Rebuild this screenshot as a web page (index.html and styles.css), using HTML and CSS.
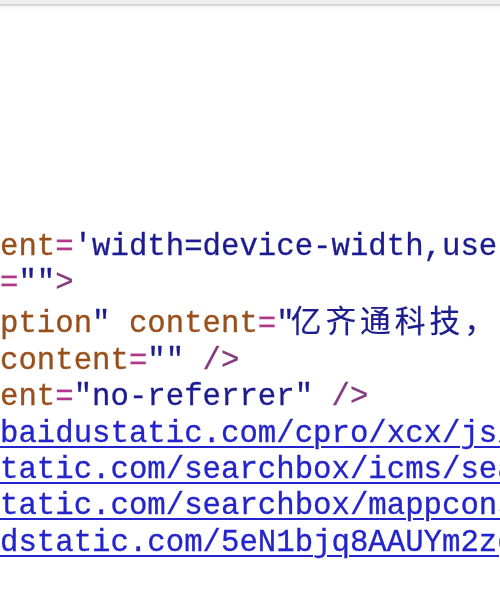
FILE: index.html
```html
<!DOCTYPE html>
<html lang="en">
<head>
    <meta charset="UTF-8">
    <meta name="viewport" content="width=device-width, initial-scale=1.0">
    <title>view-source</title>
    <link rel="stylesheet" href="styles.css">
</head>
<body>
    <div class="topbar"></div>
    <div class="topshade"></div>
    <div class="source">
        <div class="line"><span class="attr">ent</span><span class="eq">=</span><span class="val">'width=device-width,user-scalable=no,initial-scale=1.0'</span></div>
        <div class="line"><span class="eq">=</span><span class="val">""</span><span class="tag">&gt;</span></div>
        <div class="line tall"><span class="attr">ption</span><span class="val">"</span> <span class="attr">content</span><span class="eq">=</span><span class="val">"<span class="cjk">亿齐通科技，专注</span>"</span></div>
        <div class="line"><span class="attr">content</span><span class="eq">=</span><span class="val">""</span> <span class="tag">/&gt;</span></div>
        <div class="line"><span class="attr">ent</span><span class="eq">=</span><span class="val">"no-referrer"</span> <span class="tag">/&gt;</span></div>
        <div class="line"><a class="link" href="#">baidustatic.com/cpro/xcx/js/mip.js</a></div>
        <div class="line"><a class="link" href="#">tatic.com/searchbox/icms/searchbox/js/swan.js</a></div>
        <div class="line"><a class="link" href="#">tatic.com/searchbox/mappconsole/swan-core.js</a></div>
        <div class="line"><a class="link" href="#">dstatic.com/5eN1bjq8AAUYm2zgoY3K/swan.js</a></div>
    </div>
</body>
</html>
```

FILE: styles.css
```css
body {
    margin: 0;
    background: #fff;
    overflow: hidden;
}
.topbar {
    height: 4px;
    background: #eeeeee;
    border-bottom: 2px solid #d4d4d4;
}
.topshade {
    height: 6px;
    background: linear-gradient(#f6f6f6, #fff);
}
.source {
    margin-top: 216.5px;
    font-family: "Liberation Mono", monospace;
    font-size: 30.7px;
    line-height: 36.3px;
    overflow: hidden;
    filter: blur(0.5px);
    -webkit-text-stroke: 0.3px currentColor;
}
.line {
    height: 36.3px;
    white-space: pre;
}
.tall {
    height: 42px;
}
.attr {
    color: #994f1c;
}
.eq {
    color: #b0378a;
}
.val {
    color: #1c1c90;
}
.tag {
    color: #863a7e;
}
.cjk {
    margin-left: -4px;
    font-family: "Noto Sans CJK SC", sans-serif;
    letter-spacing: 4px;
    -webkit-text-stroke: 0.2px currentColor;
}
.link {
    color: #2424cc;
    text-decoration: underline;
    text-decoration-thickness: 2px;
    text-underline-offset: 4px;
}
```
